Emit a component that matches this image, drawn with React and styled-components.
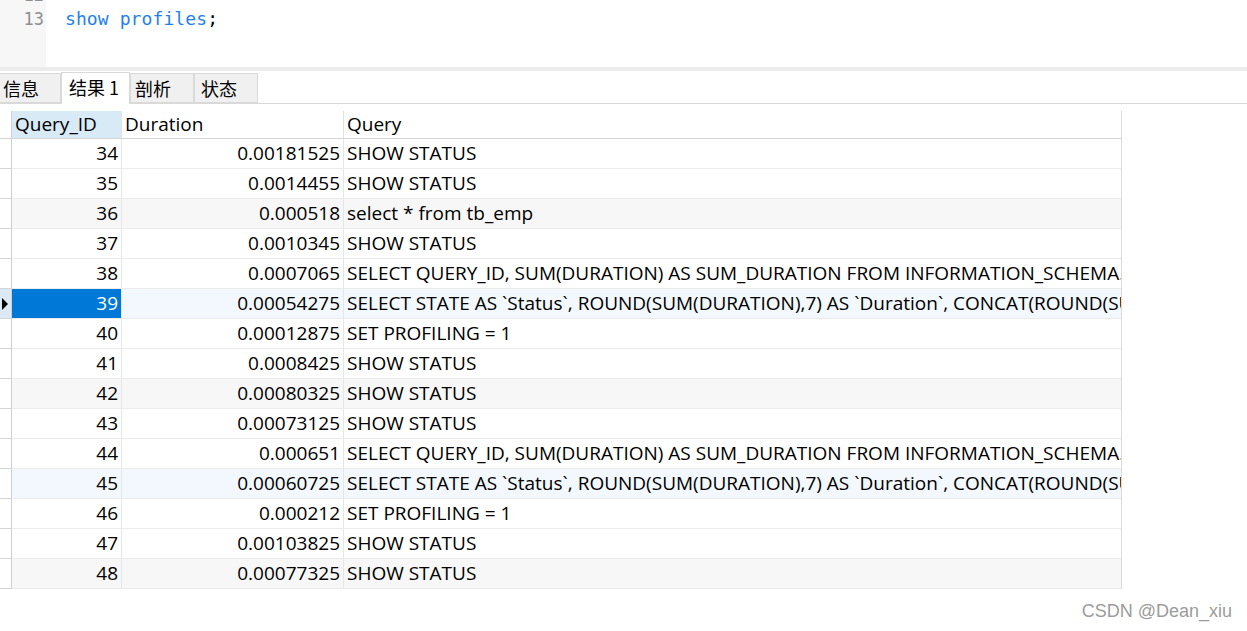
import React from "react";
import styled, { createGlobalStyle } from "styled-components";

const Global = createGlobalStyle`
  html, body { margin: 0; padding: 0; background: #fff; }
  body { font-family: "Open Sans", "Noto Sans CJK SC", sans-serif; color: #000; overflow: hidden; }
`;

const Page = styled.div`
  position: relative;
  width: 1247px;
  height: 631px;
  overflow: hidden;
  background: #fff;
`;

const Editor = styled.div`
  display: flex;
  height: 67px;
  overflow: hidden;
`;

const Gutter = styled.div`
  width: 46px;
  background: #f7f7f7;
  display: flex;
  flex-direction: column;
  align-items: flex-end;
  padding-right: 2px;
  box-sizing: border-box;
`;

const LineNo = styled.div`
  height: 24px;
  line-height: 24px;
  font-family: "DejaVu Sans Mono", monospace;
  font-size: 17px;
  color: #8f8f8f;
  &:first-child { margin-top: -17px; }
`;

const Code = styled.div`
  flex: 1;
  padding-left: 19px;
  display: flex;
  flex-direction: column;
`;

const CodeLine = styled.div`
  height: 24px;
  line-height: 24px;
  font-family: "DejaVu Sans Mono", monospace;
  font-size: 18px;
  letter-spacing: 0.1px;
  white-space: pre;
  &:first-child { margin-top: -17px; }
`;

const Kw = styled.span`
  color: #1f80f0;
`;

const Band = styled.div`
  height: 4px;
  background: #ececec;
`;

const TabBar = styled.div`
  display: flex;
  align-items: flex-end;
  height: 32px;
  border-bottom: 1px solid #d9d9d9;
  box-sizing: content-box;
`;

const Tab = styled.div`
  box-sizing: border-box;
  width: ${(p) => p.$w}px;
  height: ${(p) => (p.$active ? 32 : 30)}px;
  margin-bottom: ${(p) => (p.$active ? -1 : 0)}px;
  padding-left: ${(p) => p.$pl}px;
  background: ${(p) => (p.$active ? "#fff" : "#f0f0f0")};
  border: 1px solid #d9d9d9;
  border-bottom: ${(p) => (p.$active ? "none" : "1px solid #d9d9d9")};
  border-left: ${(p) => (p.$first ? "none" : "1px solid #d9d9d9")};
  font-family: "Noto Sans CJK SC", sans-serif;
  font-size: 18px;
  line-height: 28px;
  white-space: nowrap;
`;

const GridWrap = styled.div`
  padding-top: 7px;
`;

const Grid = styled.div`
  width: 1122px;
  border-right: 1px solid #dadada;
  box-sizing: border-box;
`;

const Row = styled.div`
  display: grid;
  grid-template-columns: 12px 110px 222px 777px;
  height: ${(p) => (p.$header ? 28 : 30)}px;
  background: ${(p) => p.$bg || "#fff"};
  border-bottom: 1px solid ${(p) => (p.$header ? "#d4d4d4" : "#ebebeb")};
  box-sizing: border-box;
`;

const Indicator = styled.div`
  border-right: 1px solid #d0d0d0;
  background: ${(p) => (p.$sel ? "#dbe9f6" : "#fff")};
  display: flex;
  align-items: center;
  justify-content: center;
  margin-bottom: ${(p) => (p.$header ? 0 : -1)}px;
  border-bottom: ${(p) => (p.$header ? "none" : "1px solid #d4d4d4")};
`;

const Cell = styled.div`
  font-size: 19px;
  line-height: 28px;
  padding: 0 3px;
  overflow: hidden;
  white-space: nowrap;
  text-align: ${(p) => (p.$right ? "right" : "left")};
  color: ${(p) => (p.$sel ? "#fff" : "#000")};
  background: ${(p) => (p.$sel ? "#0078d7" : "transparent")};
  border-right: 1px solid #e6e6e6;
  &:last-child { border-right: none; }
`;

const HeadCell = styled.div`
  font-size: 19px;
  line-height: 26px;
  padding: 0 3px;
  white-space: nowrap;
  background: ${(p) => (p.$active ? "#d9eaf7" : "#fff")};
  border-right: 1px solid #e2e2e2;
  &:last-child { border-right: none; }
`;

const Arrow = styled.span`
  width: 0;
  height: 0;
  border-top: 6px solid transparent;
  border-bottom: 6px solid transparent;
  border-left: 6px solid #000;
  margin-left: -2px;
`;

const Watermark = styled.div`
  position: absolute;
  right: 15px;
  bottom: 9px;
  font-family: "Liberation Sans", Arial, sans-serif;
  font-size: 18px;
  color: #9c9c9c;
`;

const Q1 = "SELECT QUERY_ID, SUM(DURATION) AS SUM_DURATION FROM INFORMATION_SCHEMA.PROFILING GROUP BY QUERY_ID";
const Q2 = "SELECT STATE AS `Status`, ROUND(SUM(DURATION),7) AS `Duration`, CONCAT(ROUND(SUM(DURATION)/0.000542*100,3), '%') AS `Percentage`";

const rows = [
  [34, "0.00181525", "SHOW STATUS"],
  [35, "0.0014455", "SHOW STATUS"],
  [36, "0.000518", "select * from tb_emp"],
  [37, "0.0010345", "SHOW STATUS"],
  [38, "0.0007065", Q1],
  [39, "0.00054275", Q2],
  [40, "0.00012875", "SET PROFILING = 1"],
  [41, "0.0008425", "SHOW STATUS"],
  [42, "0.00080325", "SHOW STATUS"],
  [43, "0.00073125", "SHOW STATUS"],
  [44, "0.000651", Q1],
  [45, "0.00060725", Q2],
  [46, "0.000212", "SET PROFILING = 1"],
  [47, "0.00103825", "SHOW STATUS"],
  [48, "0.00077325", "SHOW STATUS"],
];

const tabs = [
  { label: "信息", w: 61, pl: 3, first: true },
  { label: "结果 1", w: 69, pl: 7, active: true },
  { label: "剖析", w: 64, pl: 4 },
  { label: "状态", w: 64, pl: 6 },
];

export default function App() {
  return (
    <Page>
      <Global />
      <Editor>
        <Gutter>
          <LineNo>12</LineNo>
          <LineNo>13</LineNo>
        </Gutter>
        <Code>
          <CodeLine> </CodeLine>
          <CodeLine>
            <Kw>show</Kw> <Kw>profiles</Kw>;
          </CodeLine>
        </Code>
      </Editor>
      <Band />
      <TabBar>
        {tabs.map((t) => (
          <Tab key={t.label} $w={t.w} $pl={t.pl} $active={t.active} $first={t.first}>
            {t.label}
          </Tab>
        ))}
      </TabBar>
      <GridWrap>
        <Grid>
          <Row $header>
            <Indicator $header />
            <HeadCell $active>Query_ID</HeadCell>
            <HeadCell>Duration</HeadCell>
            <HeadCell>Query</HeadCell>
          </Row>
          {rows.map(([id, dur, q], i) => {
            const sel = id === 39;
            const hover = id === 45;
            const bg = sel || hover ? "#f2f8fd" : i % 3 === 2 ? "#f7f7f7" : "#fff";
            return (
              <Row key={id} $bg={bg}>
                <Indicator $sel={sel}>{sel && <Arrow />}</Indicator>
                <Cell $right $sel={sel}>{id}</Cell>
                <Cell $right>{dur}</Cell>
                <Cell>{q}</Cell>
              </Row>
            );
          })}
        </Grid>
      </GridWrap>
      <Watermark>CSDN @Dean_xiu</Watermark>
    </Page>
  );
}
